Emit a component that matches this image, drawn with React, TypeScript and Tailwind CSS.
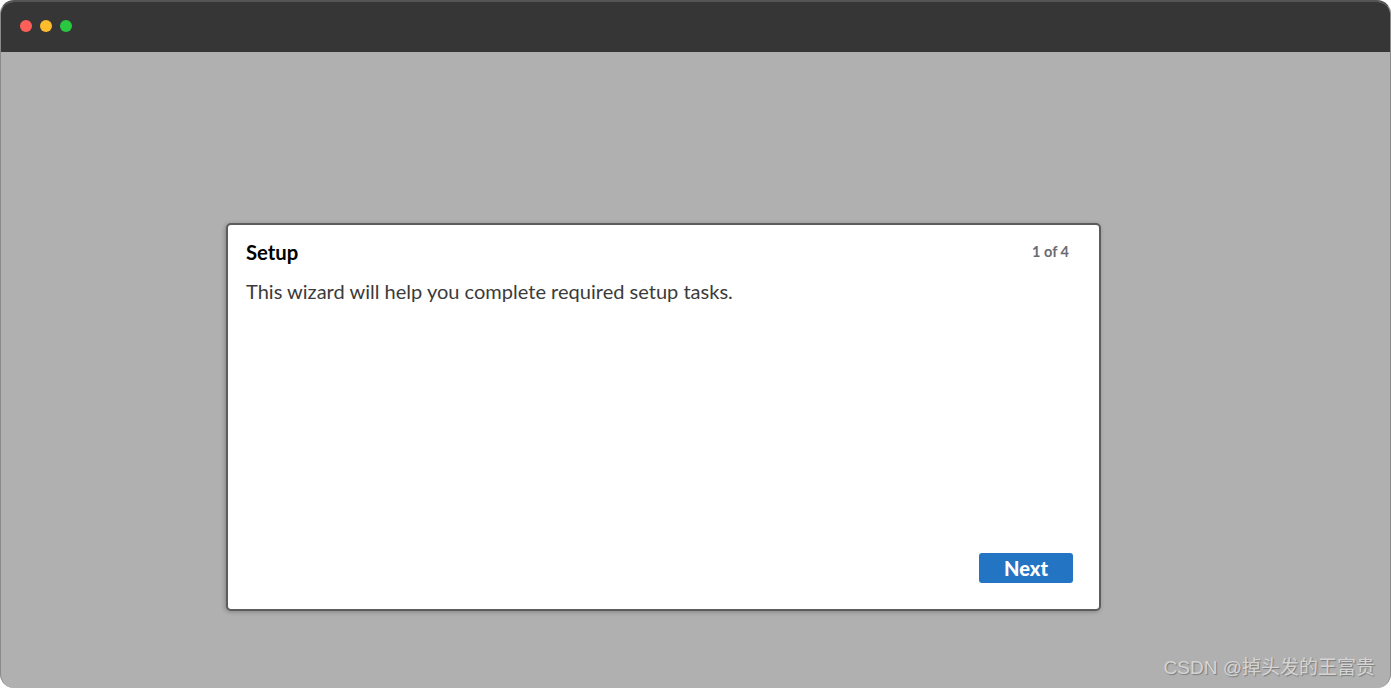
import React from "react";

export default function App() {
  return (
    <div className="h-[688px] w-[1391px] overflow-hidden bg-white font-['Lato',sans-serif]">
      <div className="relative flex h-full flex-col overflow-hidden rounded-[14px] border-t-2 border-l border-r border-t-[#555] border-l-[#8a8a8a] border-r-[#8a8a8a] bg-[#b0b0b0]">
        <div className="flex h-[50px] shrink-0 items-center gap-2 bg-[#363636] pb-[2px] pl-[19px]">
          <span className="h-3 w-3 rounded-full bg-[#ff5f57]" />
          <span className="h-3 w-3 rounded-full bg-[#ffbd2e]" />
          <span className="h-3 w-3 rounded-full bg-[#28c840]" />
        </div>

        <div className="flex flex-1 items-start pl-[225px] pt-[171px]">
          <div className="flex h-[388px] w-[875px] flex-col rounded-[5px] border-2 border-[#5c5c5c] bg-white pb-[26px] pl-[18px] pr-[26px] pt-[14px] shadow-[-1px_1px_4px_rgba(0,0,0,0.25)]">
            <div className="flex items-center justify-between pr-[4px]">
              <h1 className="text-[20.3px] leading-[26px] font-bold text-black">Setup</h1>
              <span className="text-[14.5px] leading-[26px] font-bold text-[#6b6b73]">1 of 4</span>
            </div>
            <p className="mt-[12px] text-[20.05px] leading-[28px] font-normal text-[#3b3b3b]">
              This wizard will help you complete required setup tasks.
            </p>
            <div className="mt-auto flex justify-end">
              <button className="h-[30px] w-[94px] rounded-[3px] bg-[#2474c4] pb-[4px] text-[20px] font-black text-white">
                Next
              </button>
            </div>
          </div>
        </div>

        <span className="absolute bottom-[6px] right-[15px] font-['Liberation_Sans','Noto_Sans_CJK_SC',sans-serif] text-[19px] leading-[28px] text-[#d4d4d4] [text-shadow:1px_1px_1px_rgba(0,0,0,0.3)]">
          CSDN @掉头发的王富贵
        </span>
      </div>
    </div>
  );
}
